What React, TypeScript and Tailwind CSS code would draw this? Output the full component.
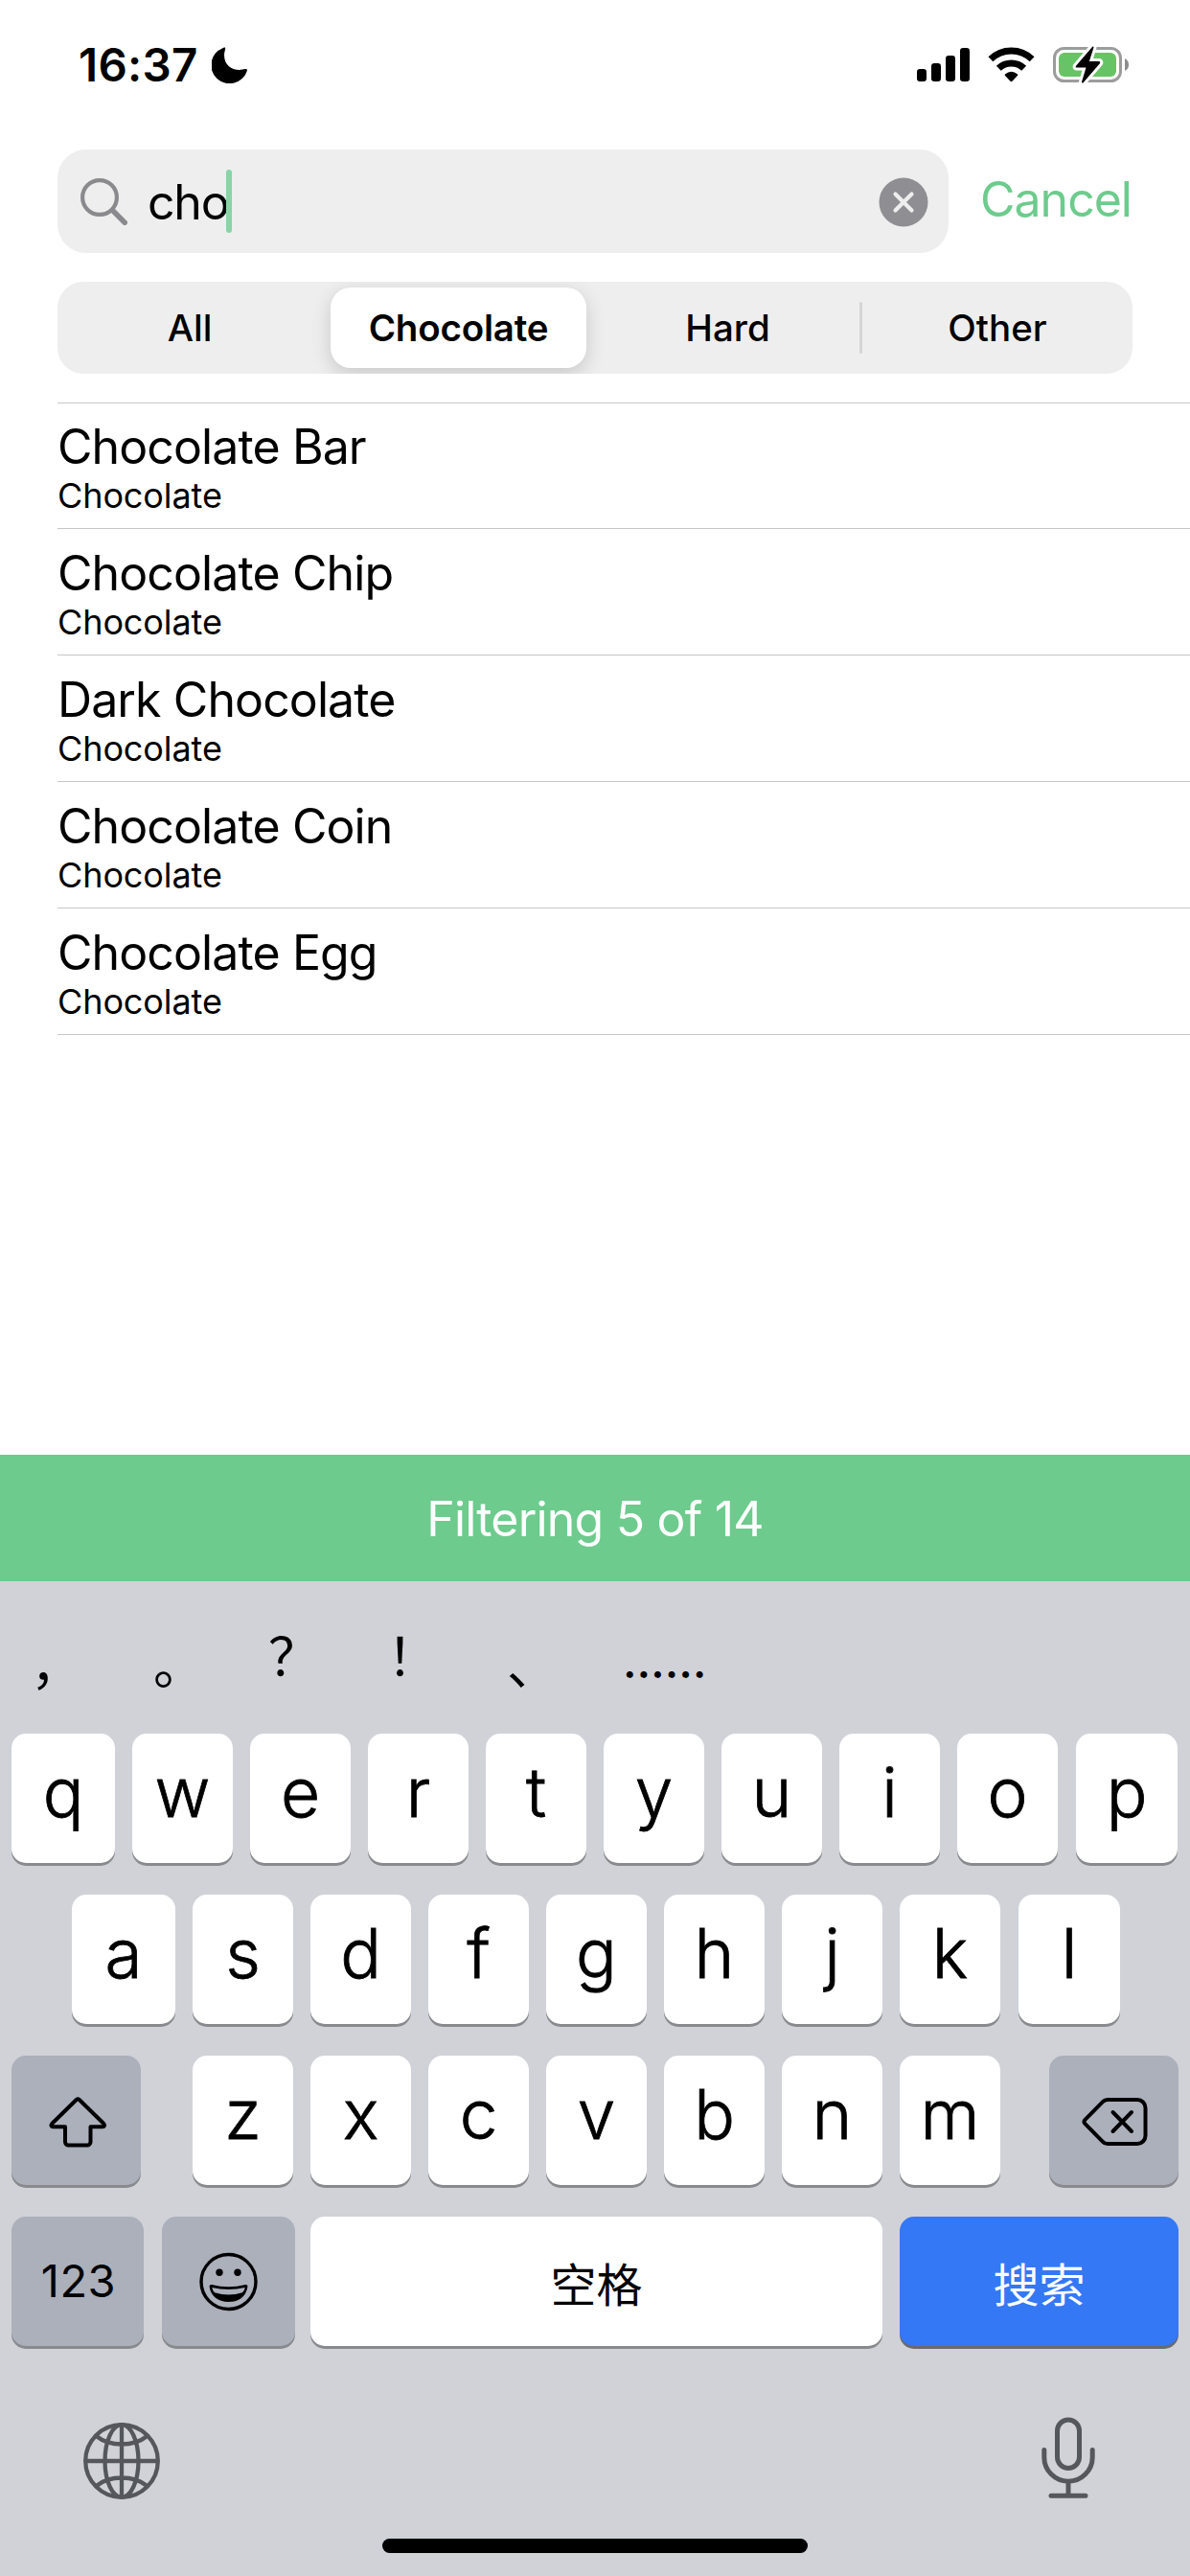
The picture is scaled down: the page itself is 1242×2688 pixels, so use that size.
import React from "react";

const candies = ["Chocolate Bar", "Chocolate Chip", "Dark Chocolate", "Chocolate Coin", "Chocolate Egg"];

function StatusBar() {
  return (
    <header className="flex h-[156px] items-start justify-between pl-[82px] pr-[63px]">
      <div className="flex items-start">
        <span className="mt-[44px] w-[139px] whitespace-nowrap text-[47.500px] leading-[48px] font-semibold tracking-[0.3px]">16:37</span>
        <svg className="mt-[49px] h-[38px] w-[38px]" viewBox="0 0 38 38">
          <path d="M14 .7c-.9-.5-1.700 0-2.600.5A19.200 19.200 0 1 0 36.800 25c.5-1.300-.3-2.300-1.900-1.900C24 26 13 21 13 8.500c0-2 .5-4 1-5.800.2-.8.4-1.600 0-2Z" />
        </svg>
      </div>
      <svg className="mt-[46px] h-[44px] w-[224px]" viewBox="955 46 224 44">
        <rect x="957" y="72" width="10" height="13" rx="3.200" />
        <rect x="972" y="66" width="10" height="19" rx="3.200" />
        <rect x="987" y="58" width="10" height="27" rx="3.200" />
        <rect x="1002" y="50" width="10" height="35" rx="3.200" />
        <g fill="none" stroke="#000" strokeWidth="7">
          <path d="M1033.900 61.700a31 31 0 0 1 43.200 0" />
          <path d="M1042.300 71.300a19 19 0 0 1 26.400 0" />
        </g>
        <path d="M1048.900 77.500q6.600-5.700 13.200 0 .6.600 0 1.200l-5.600 6q-1 .9-2 0l-5.600-6q-.6-.6 0-1.200Z" />
        <rect x="1100.500" y="50.500" width="69" height="34" rx="10" fill="none" stroke="#9c9c9c" strokeWidth="3" />
        <rect x="1105" y="55" width="60" height="25" rx="6" fill="#67c466" />
        <path d="M1174 61v13q4-2 4-6.500t-4-6.500Z" fill="#8c8c8c" />
        <path d="M1140.200 48.700 1122.800 69q-.6 1.500.9 1.500h9.800l-4.600 15.300q.4 1.400 1.700.4L1148.100 66q.6-1.700-.9-2h-10.300l4.600-14.500q-.2-1.500-1.300-.8Z" fill="#000" stroke="#fff" strokeWidth="6" strokeLinejoin="round" paintOrder="stroke" />
      </svg>
    </header>
  );
}

function SearchRow() {
  return (
    <div className="flex h-[108px] pl-[60px]">
      <div className="flex w-[930px] items-start rounded-[30px] bg-[#eeeeee] pl-[24px] pr-[21px]">
        <svg className="mt-[30px] h-[50px] w-[50px]" viewBox="0 0 50 50" fill="none" stroke="#8a8a8e" strokeLinecap="round">
          <circle cx="20" cy="20" r="17.900" strokeWidth="4.200" />
          <path d="M33.500 33.500 46.200 46.200" strokeWidth="5.500" />
        </svg>
        <span className="ml-[20px] mt-[25px] w-[82px] whitespace-nowrap text-[50px] leading-[60px] tracking-[-1.2px]">cho</span>
        <span className="mt-[21px] h-[66px] w-[6px] rounded-full bg-[#87d5a6]" />
        <svg className="ml-auto mt-[29px] h-[52px] w-[52px]" viewBox="0 0 52 52">
          <circle cx="26" cy="26" r="25.500" fill="#8e8e93" />
          <path d="m17.500 17.500 17 17m0-17-17 17" stroke="#eee" strokeWidth="4.200" strokeLinecap="round" />
        </svg>
      </div>
      <span className="ml-[33px] mt-[22px] whitespace-nowrap text-[50px] leading-[60px] tracking-[-1px] text-[#6dcb8d]">Cancel</span>
    </div>
  );
}

function Segments() {
  return (
    <div className="mx-[60px] mt-[30px] flex h-[96px] items-center overflow-hidden rounded-[27px] bg-[#eeeeee] text-[38.5px] leading-none font-medium">
      <span className="w-[276px] text-center">All</span>
      <span className="ml-[9px] flex h-[84px] w-[267px] items-center justify-center rounded-[21px] bg-white font-semibold tracking-[-0.2px] shadow-[0_6px_20px_rgba(0,0,0,0.16)]">Chocolate</span>
      <span className="ml-[10px] w-[275px] text-center">Hard</span>
      <span className="h-[54px] w-[3px] rounded-full bg-[#d5d5d6]" />
      <span className="flex-1 text-center">Other</span>
    </div>
  );
}

function Results() {
  return (
    <ul className="ml-[60px] mt-[30px] border-t border-[#c6c6c8]">
      {candies.map((name) => (
        <li key={name} className="flex h-[132px] flex-col border-b border-[#c6c6c8] pt-[16px] first:h-[131px] first:pt-[15px]">
          <span className="whitespace-nowrap text-[50px] leading-[60px] tracking-[-0.9px]">{name}</span>
          <span className="mt-[-1px] whitespace-nowrap text-[36px] leading-[44px] tracking-[-0.1px]">Chocolate</span>
        </li>
      ))}
    </ul>
  );
}

const keyBase = "flex h-[135px] shrink-0 justify-center rounded-[15px] shadow-[0_3px_0_#898a8d]";

const keyWidths = {
  first: "w-[108px]",
  middle: "w-[105px]",
  last: "ml-px w-[106px]",
};

function Letter({ ch, size = "middle" }: { ch: string; size?: keyof typeof keyWidths }) {
  return (
    <div className={`${keyBase} bg-white pt-[17px] text-[71px] leading-[88px] font-light [-webkit-text-stroke:0.8px_#000] ${keyWidths[size]}`}>{ch}</div>
  );
}

function LetterRow({ letters }: { letters: string }) {
  return (
    <>
      {letters.split("").map((c, i) => (
        <Letter key={c} ch={c} size={i === 0 ? "first" : i === letters.length - 1 ? "last" : "middle"} />
      ))}
    </>
  );
}

function Keyboard() {
  return (
    <section className="flex h-[1038px] flex-col bg-[#d1d2d8]">
      <div className="flex h-[159px] items-start pt-[55px] font-['Noto_Sans_CJK_SC',sans-serif] text-[54px] leading-[60px]">
        <span className="ml-[32px] w-[128px]">，</span>
        <span className="w-[120px]">。</span>
        <span className="mt-[-9px] w-[124px]">？</span>
        <span className="mt-[-9px] w-[125px]">！</span>
        <span className="w-[121px]">、</span>
        <span className="mt-[-1px] whitespace-nowrap font-[Inter,sans-serif] text-[48px] font-medium">……</span>
      </div>

      <div className="flex gap-[18px] pl-[12px]">
        <LetterRow letters="qwertyuiop" />
      </div>
      <div className="mt-[33px] flex gap-[18px] pl-[75px]">
        <LetterRow letters="asdfghjkl" />
      </div>
      <div className="mt-[33px] flex pl-[12px]">
        <div className={`${keyBase} mr-[54px] w-[135px] bg-[#abb0bb]`}>
          <svg className="ml-[2px] mt-[41px] h-[57px] w-[62px]" viewBox="0 0 62 57" fill="none" stroke="#000" strokeWidth="4" strokeLinejoin="round">
            <path d="M30 4.800a2 2 0 0 1 2.500 0L58.300 30c1.500 1.600.7 3.300-1.300 3.300H44.500V49a3.500 3.500 0 0 1-3.500 3.500H21.500A3.500 3.500 0 0 1 18 49V33.300H5.500c-2 0-2.800-1.700-1.300-3.300Z" />
          </svg>
        </div>
        <div className="flex gap-[18px]">
          {"zxcvbnm".split("").map((c) => <Letter key={c} ch={c} />)}
        </div>
        <div className={`${keyBase} ml-[51px] w-[135px] bg-[#abb0bb]`}>
          <svg className="mt-[42px] h-[54px] w-[70px]" viewBox="0 0 70 54" fill="none" stroke="#000" strokeWidth="4" strokeLinejoin="round" strokeLinecap="round">
            <path d="M28 4h31a8.500 8.500 0 0 1 8.500 8.500v29A8.500 8.500 0 0 1 59 50H28q-3 0-5-2.200L4.500 29.200q-2-2.200 0-4.400L23 6.200Q25 4 28 4Z" />
            <path d="m33.500 17 19.500 20m0-20-19.500 20" />
          </svg>
        </div>
      </div>
      <div className="mt-[33px] flex pl-[12px]">
        <div className={`${keyBase} w-[138px] bg-[#abb0bb] pl-[2px] pt-[37px] text-[47px] leading-[60px] tracking-[0.5px]`}>123</div>
        <div className={`${keyBase} ml-[19px] w-[139px] bg-[#abb0bb]`}>
          <svg className="mt-[37px] h-[62px] w-[62px]" viewBox="0 0 62 62">
            <circle cx="30.500" cy="31" r="28.500" fill="none" stroke="#000" strokeWidth="3.400" />
            <circle cx="21" cy="21.300" r="3.700" />
            <circle cx="40" cy="21.300" r="3.700" />
            <path fillRule="evenodd" d="M13 34Q30.500 38.500 48 34q2.700-.6 2.400 2.300C49 46 41.500 52 30.500 52S12 46 10.600 36.300q-.3-2.900 2.400-2.300Zm.3 2.900q.6 3.300 2.700 5.300Q30.500 46.800 45 42.200q2.100-2 2.700-5.300Q30.500 41 13.300 36.900Z" />
          </svg>
        </div>
        <div className={`${keyBase} ml-[16px] w-[597px] bg-white pt-[36px] font-['Noto_Sans_CJK_SC',sans-serif] text-[48px] leading-[64px]`}>空格</div>
        <div className="ml-[18px] flex h-[135px] w-[291px] justify-center rounded-[15px] bg-[#3478f6] pt-[36px] font-['Noto_Sans_CJK_SC',sans-serif] text-[48px] leading-[64px] text-white shadow-[0_3px_0_#686a6e]">搜索</div>
      </div>

      <div className="mt-[72px] flex items-start justify-between pl-[86px] pr-[97px]">
        <svg className="mt-[7px] h-[82px] w-[82px]" viewBox="0 0 82 82" fill="none" stroke="#54575c" strokeWidth="4.300">
          <circle cx="41" cy="41" r="37.800" />
          <ellipse cx="41" cy="41" rx="17.500" ry="37.800" />
          <path d="M41 3v76M3 41h76M14.500 15q10.500 8.500 26.500 8.500T67.500 15M14.500 67q10.500-8.500 26.500-8.500T67.500 67" />
        </svg>
        <svg className="h-[90px] w-[60px]" viewBox="0 0 60 90" fill="none" stroke="#54575c" strokeWidth="5" strokeLinecap="round">
          <rect x="18.500" y="5" width="23" height="50.500" rx="11.500" />
          <path d="M4.800 36.500V44a25.200 25.200 0 0 0 50.400 0v-7.500M30 69.500V83M12 84.300h36" />
        </svg>
      </div>
      <div className="mx-auto mt-auto mb-[24px] h-[15px] w-[444px] rounded-full bg-black" />
    </section>
  );
}

export default function App() {
  return (
    <main className="flex h-[2688px] w-[1242px] flex-col overflow-hidden bg-white font-[Inter,'Noto_Sans_CJK_SC',sans-serif] text-black">
      <StatusBar />
      <SearchRow />
      <Segments />
      <Results />
      <div className="mt-auto flex h-[132px] shrink-0 justify-center bg-[#6dcb8d] pt-[37px] text-[50px] leading-[60px] tracking-[-0.8px] text-white">Filtering 5 of 14</div>
      <Keyboard />
    </main>
  );
}
